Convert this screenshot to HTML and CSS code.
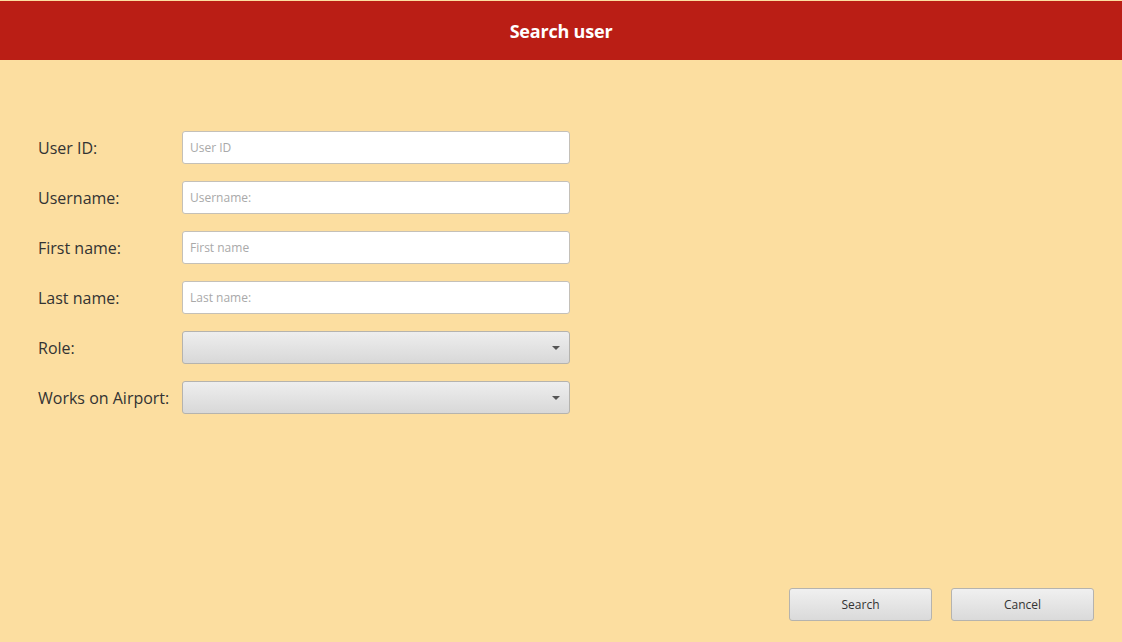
FILE: index.html
```html
<!DOCTYPE html>
<html>
<head>
<meta charset="utf-8">
<link rel="stylesheet" href="styles.css">
</head>
<body>
<div class="app">
  <header class="header">Search user</header>
  <main class="content">
    <div class="form">
      <div class="row"><label class="label">User ID:</label><input class="field" placeholder="User ID"></div>
      <div class="row"><label class="label">Username:</label><input class="field" placeholder="Username:"></div>
      <div class="row"><label class="label">First name:</label><input class="field" placeholder="First name"></div>
      <div class="row"><label class="label">Last name:</label><input class="field" placeholder="Last name:"></div>
      <div class="row"><label class="label">Role:</label><div class="combo"><span class="arrow"></span></div></div>
      <div class="row"><label class="label">Works on Airport:</label><div class="combo"><span class="arrow"></span></div></div>
    </div>
    <div class="actions">
      <button class="btn">Search</button>
      <button class="btn">Cancel</button>
    </div>
  </main>
</div>
</body>
</html>
```
FILE: styles.css
```css
html, body {
  margin: 0;
  padding: 0;
  height: 100%;
}
body {
  background: #fcdea0;
  font-family: "Open Sans", "Noto Sans", "DejaVu Sans", sans-serif;
  color: #2e2e2e;
}
.app {
  display: flex;
  flex-direction: column;
  height: 642px;
}
.header {
  margin-top: 1px;
  height: 59px;
  background: #ba1e15;
  color: #ffffff;
  font-weight: 700;
  font-size: 18px;
  letter-spacing: -0.2px;
  display: flex;
  align-items: center;
  justify-content: center;
}
.content {
  flex: 1;
  display: flex;
  flex-direction: column;
  justify-content: space-between;
}
.form {
  margin-top: 71px;
  margin-left: 38px;
  display: flex;
  flex-direction: column;
  gap: 17px;
}
.row {
  display: flex;
  align-items: center;
  height: 33px;
}
.label {
  width: 144px;
  font-size: 16px;
  color: #333333;
  letter-spacing: 0;
}
.field {
  box-sizing: border-box;
  width: 388px;
  height: 33px;
  border: 1px solid #c4c0b8;
  border-radius: 3px;
  background: #ffffff;
  padding: 0 7px;
  font-family: "Open Sans", "Noto Sans", sans-serif;
  font-size: 12px;
  color: #333;
  outline: none;
}
.field::placeholder {
  color: #a9a9a9;
}
.combo {
  box-sizing: border-box;
  width: 388px;
  height: 33px;
  border: 1px solid #b5b3ae;
  border-radius: 3px;
  background: linear-gradient(#eeeeee, #d8d8d8);
  display: flex;
  align-items: center;
  justify-content: flex-end;
  padding-right: 9px;
}
.arrow {
  width: 0;
  height: 0;
  border-left: 4px solid transparent;
  border-right: 4px solid transparent;
  border-top: 4px solid #555555;
}
.actions {
  display: flex;
  justify-content: flex-end;
  gap: 19px;
  margin-right: 28px;
  margin-bottom: 21px;
}
.btn {
  box-sizing: border-box;
  width: 143px;
  height: 33px;
  border: 1px solid #b5b3ae;
  border-radius: 3px;
  background: linear-gradient(#f0f0f0, #dadada);
  font-family: "Open Sans", "Noto Sans", sans-serif;
  font-size: 12px;
  color: #333;
}
```
